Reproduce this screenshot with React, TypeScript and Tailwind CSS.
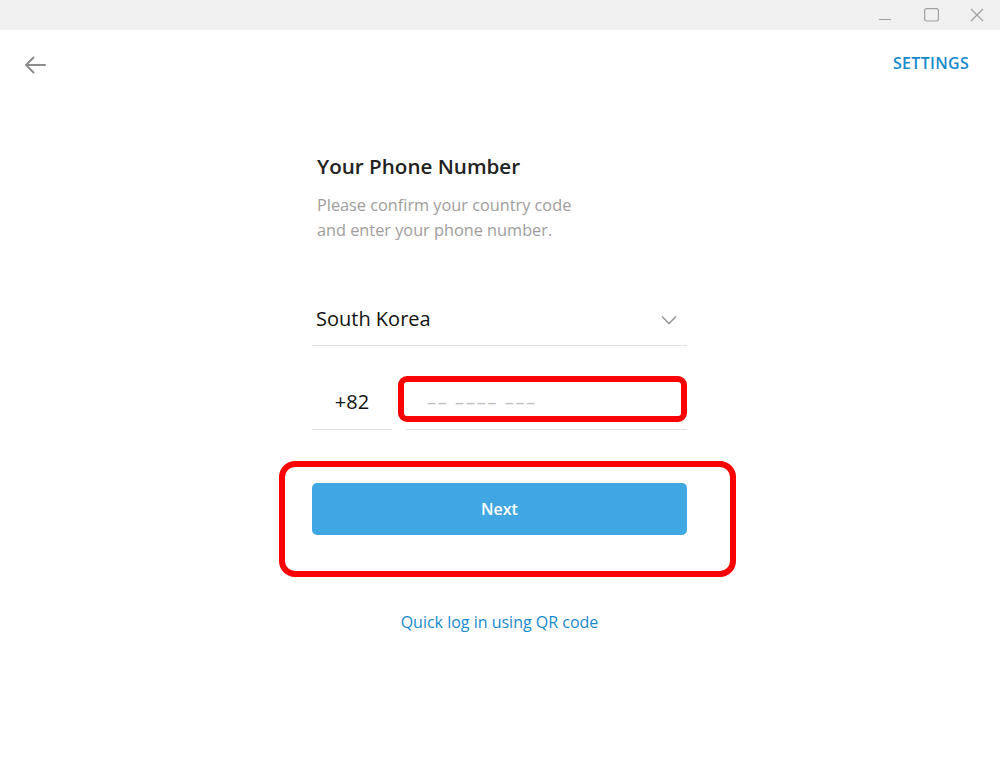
import React from "react";

export default function App() {
  return (
    <div
      className="w-[1000px] h-[780px] bg-white flex flex-col overflow-hidden"
      style={{ fontFamily: '"Open Sans", "Noto Sans", sans-serif' }}
    >
      {/* Title bar */}
      <div className="h-[30px] bg-[#f0f0f0] flex justify-end items-center">
        <div className="w-[46px] h-[30px] flex items-center justify-center">
          <svg width="14" height="14" viewBox="0 0 14 14">
            <line x1="1" y1="11.5" x2="13" y2="11.5" stroke="#a0a0a0" strokeWidth="1" />
          </svg>
        </div>
        <div className="w-[46px] h-[30px] flex items-center justify-center">
          <svg width="15" height="14" viewBox="0 0 15 14">
            <rect x="0.6" y="0.6" width="13.8" height="12.4" rx="2" fill="none" stroke="#a0a0a0" strokeWidth="1.2" />
          </svg>
        </div>
        <div className="w-[46px] h-[30px] flex items-center justify-center">
          <svg width="14" height="14" viewBox="0 0 14 14">
            <path d="M1 1 L13 13 M13 1 L1 13" stroke="#a0a0a0" strokeWidth="1.2" fill="none" />
          </svg>
        </div>
      </div>

      {/* Header */}
      <div className="h-[70px] flex items-center justify-between pl-[24px] pr-[31px]">
        <svg width="22" height="18" viewBox="0 0 22 18">
          <path d="M21 9 H2 M9.5 1.5 L2 9 L9.5 16.5" stroke="#8c8c8c" strokeWidth="2" fill="none" strokeLinecap="round" strokeLinejoin="round" />
        </svg>
        <span className="text-[16px] font-semibold text-[#168acd] mb-[4px] tracking-[0.3px]">SETTINGS</span>
      </div>

      {/* Form column */}
      <div className="w-[375px] ml-[312px] flex flex-col mt-[52px]">
        <h1 className="pl-[5px] text-[20.6px] leading-[28px] font-semibold text-[#222]">Your Phone Number</h1>
        <p className="pl-[5px] mt-[13px] text-[16.3px] leading-[25px] text-[#a09d9c]">
          Please confirm your country code
          <br />
          and enter your phone number.
        </p>

        {/* Country */}
        <div className="mt-[51px] h-[52px] flex items-end justify-between border-b border-[#e2e2e2] pb-[13px] pl-[4px] pr-[10px]">
          <span className="text-[20px] leading-[26px] text-[#111]">South Korea</span>
          <svg width="16" height="10" viewBox="0 0 16 10" className="mb-[7px]">
            <path d="M1 1.5 L8 8.5 L15 1.5" stroke="#9a9a9a" strokeWidth="1.6" fill="none" />
          </svg>
        </div>

        {/* Phone row */}
        <div className="mt-[31px] flex gap-[14px]">
          <div className="w-[80px] h-[53px] flex items-end justify-center border-b border-[#e2e2e2] pb-[14px]">
            <span className="text-[20px] leading-[26px] text-[#111]">+82</span>
          </div>
          <div className="relative flex-1 h-[53px] flex items-end border-b border-[#e2e2e2] pb-[14px] pl-[21px]">
            <span className="text-[18px] leading-[26px] text-[#bdbdbd] tracking-[1.8px]">–– –––– –––</span>
            <div className="absolute left-[-8px] top-[-1px] w-[289px] h-[46px] border-[6px] border-[#ff0000] rounded-[9px]" />
          </div>
        </div>

        {/* Next button */}
        <div className="relative mt-[53px]">
          <button className="w-full h-[52px] bg-[#40a7e3] rounded-[5px] text-white text-[16px] font-semibold">
            Next
          </button>
          <div className="absolute left-[-33px] top-[-22px] w-[457px] h-[116px] border-[6px] border-[#ff0000] rounded-[16px]" />
        </div>

        <div className="mt-[76px] text-center text-[16px] leading-[22px] text-[#168acd]">Quick log in using QR code</div>
      </div>
    </div>
  );
}
